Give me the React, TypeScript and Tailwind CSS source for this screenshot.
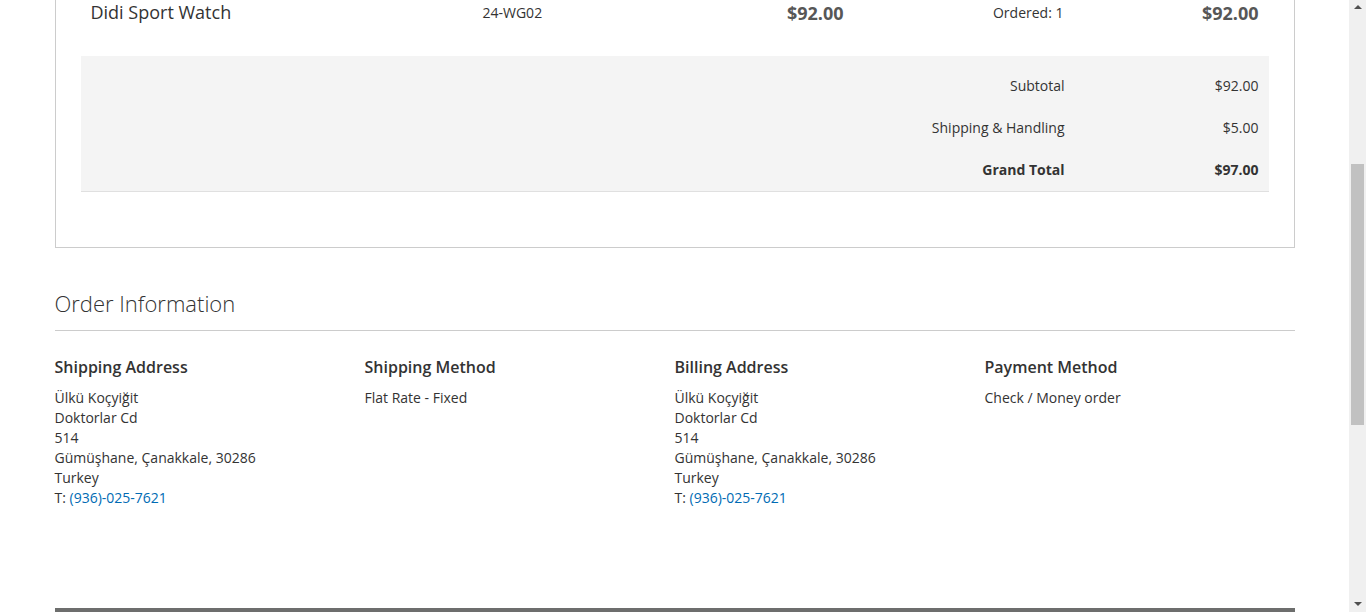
import React from "react";

const Address = () => (
  <div className="text-[14px] leading-[20px] text-[#333]">
    <div>Ülkü Koçyiğit</div>
    <div>Doktorlar Cd</div>
    <div>514</div>
    <div>Gümüşhane, Çanakkale, 30286</div>
    <div>Turkey</div>
    <div>
      T: <a className="text-[#006bb4]">(936)-025-7621</a>
    </div>
  </div>
);

const Block = ({ title, children }: { title: string; children: React.ReactNode }) => (
  <div className="w-[310px]">
    <div className="text-[16px] font-semibold leading-[20px] text-[#333]">{title}</div>
    <div className="mt-[11px]">{children}</div>
  </div>
);

export default function App() {
  return (
    <div
      className="flex h-[612px] w-[1366px] overflow-hidden bg-white text-[#333]"
      style={{ fontFamily: '"Open Sans", "Noto Sans", sans-serif' }}
    >
      <div className="flex w-[1349px] flex-col">
        <div className="mx-auto flex w-[1240px] flex-1 flex-col">
          {/* Items box */}
          <div className="border-x border-b border-[#cccccc] px-[25px] pb-[55px]">
            <div className="flex h-[56px] items-start pt-[1px] text-[14px]">
              <div className="w-[392px] pl-[10px] text-[18px] leading-[22px]">Didi Sport Watch</div>
              <div className="w-[227px] pl-[10px] pt-[2px] leading-[20px]">24-WG02</div>
              <div className="w-[154px] pr-[10px] text-right text-[18px] font-bold leading-[24px] text-[#575757]">$92.00</div>
              <div className="w-[220px] pr-[10px] pt-[2px] text-right leading-[20px]">Ordered: 1</div>
              <div className="flex-1 pr-[10px] text-right text-[18px] font-bold leading-[24px] text-[#575757]">$92.00</div>
            </div>
            <div className="border-b border-[#e0e0e0] bg-[#f4f4f4] pb-[1px] pt-[8px] text-[14px]">
              {[
                ["Subtotal", "$92.00", false],
                ["Shipping & Handling", "$5.00", false],
                ["Grand Total", "$97.00", true],
              ].map(([l, v, b]) => (
                <div key={l as string} className={`flex h-[42px] items-center ${b ? "font-bold" : ""}`}>
                  <div className="w-[994px] pr-[10px] text-right">{l}</div>
                  <div className="flex-1 pr-[10px] text-right">{v}</div>
                </div>
              ))}
            </div>
          </div>

          {/* Order information */}
          <div className="mt-[41px] border-b border-[#cccccc] pb-[13px] text-[22px] font-light leading-[28px]">
            Order Information
          </div>
          <div className="mt-[26px] flex">
            <Block title="Shipping Address">
              <Address />
            </Block>
            <Block title="Shipping Method">
              <div className="text-[14px] leading-[20px]">Flat Rate - Fixed</div>
            </Block>
            <Block title="Billing Address">
              <Address />
            </Block>
            <Block title="Payment Method">
              <div className="text-[14px] leading-[20px]">Check / Money order</div>
            </Block>
          </div>
          <div className="flex-1" />
          <div className="h-[4px] bg-[#6d6e6d]" />
        </div>
      </div>
      {/* Scrollbar */}
      <div className="relative flex w-[17px] flex-col items-center bg-[#f0f0f0]">
        <div className="mt-[5px] h-0 w-0 border-x-[4px] border-b-[4px] border-x-transparent border-b-[#505050]" />
        <div className="mt-[155px] h-[261px] w-[13px] bg-[#c1c1c1]" />
        <div className="flex-1" />
        <div className="mb-[6px] h-0 w-0 border-x-[4px] border-t-[4px] border-x-transparent border-t-[#505050]" />
      </div>
    </div>
  );
}
